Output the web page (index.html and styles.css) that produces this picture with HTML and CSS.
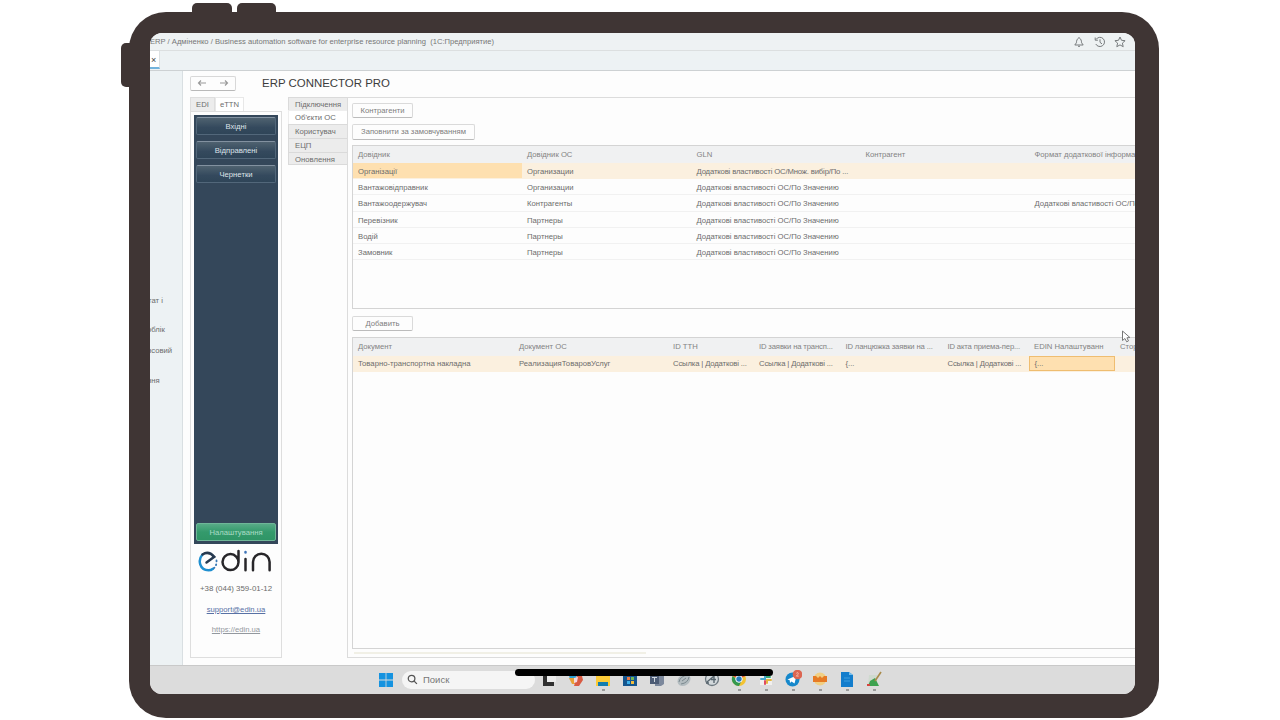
FILE: index.html
```html
<!DOCTYPE html>
<html lang="uk">
<head>
<meta charset="utf-8">
<title>ERP Connector Pro</title>
<link rel="stylesheet" href="styles.css">
</head>
<body>
<div class="tablet">
  <i class="hw hw-a"></i><i class="hw hw-b"></i><i class="hw hw-side"></i>
  <div class="screen">
    <header class="titlebar">
      <span class="app-name">ERP / Адміненко / Business automation software for enterprise resource planning &nbsp;(1С:Предприятие)</span>
      <span class="tools">
        <svg viewBox="0 0 12 12"><path d="M1.800 9h8.400L8.600 6.800C8.500 4.500 7.900 3 6 1.500 4.100 3 3.500 4.500 3.400 6.800ZM5 10.300h2"/></svg>
        <svg viewBox="0 0 12 12"><path d="M2 3.500A4.600 4.600 0 1 1 1.800 8M1.200 1.500v2.700h2.700M6 3.300v3l2 1.600"/></svg>
        <svg viewBox="0 0 12 12"><path d="m6 1 1.500 3.300 3.600.4-2.700 2.400.8 3.600L6 8.900l-3.200 1.800.8-3.600L.9 4.700l3.600-.4Z"/></svg>
      </span>
    </header>
    <div class="tabstrip"><span class="open-tab">×</span></div>
    <div class="workspace">
      <aside class="sections">
        <span>тат і</span><span>облік</span><span>нсовий</span><span>ння</span>
      </aside>
      <main class="page">
        <div class="heading">
          <div class="history">
            <svg viewBox="0 0 10 8"><path d="M9 4H1.500M4 1.500 1.500 4 4 6.500"/></svg>
            <svg viewBox="0 0 10 8"><path d="M1 4h7.500M6 1.500 8.500 4 6 6.500"/></svg>
          </div>
          <h1>ERP CONNECTOR PRO</h1>
        </div>
        <div class="columns">
          <section class="edin">
            <div class="toptabs"><span class="toptab">EDI</span><span class="toptab current">eTTN</span></div>
            <div class="edin-box">
              <div class="menu">
                <button>Вхідні</button><button>Відправлені</button><button>Чернетки</button>
                <button class="green">Налаштування</button>
              </div>
              <svg class="logo" viewBox="0 0 74 26">
                <g fill="none" stroke-width="2.500" stroke-linecap="round">
                  <path stroke="#1f8fd0" d="M4.500 6.500C-.5 12 1.500 22 10.500 22.300q2.500 0 4.500-1.600"/>
                  <path stroke="#263a50" d="M8.500 14.500 16.300 8.800Q10.500 2.300 4.500 6.500"/>
                  <path stroke="#3577b5" stroke-width="1.800" stroke-dasharray=".8 3" d="M18.500 12.500Q19 17.500 15.500 20.500"/>
                  <path stroke="#272629" d="M40.500 3V14.300a8 8 0 1 1-8-8.200c4.500 0 8 3.700 8 8.200M47.500 11v11.300M55 22.300V14a8.200 8.200 0 0 1 16.600 0v8.300"/>
                  <path stroke="#3e74b8" d="M47.500 4v.5"/>
                </g>
              </svg>
              <p class="phone">+38 (044) 359-01-12</p>
              <a class="mail">support@edin.ua</a>
              <a class="site">https://edin.ua</a>
            </div>
          </section>
          <nav class="sidetabs">
            <span>Підключення</span><span class="current">Об'єкти ОС</span><span>Користувач</span><span>ЕЦП</span><span>Оновлення</span>
          </nav>
          <section class="content">
            <button class="btn b1">Контрагенти</button>
            <button class="btn b2">Заповнити за замовчуванням</button>
            <div class="table t1">
              <div class="row head"><span>Довідник</span><span>Довідник ОС</span><span>GLN</span><span>Контрагент</span><span>Формат додаткової інформації</span></div>
              <div class="row sel"><span class="cell-on">Організації</span><span>Организации</span><span class="fit">Додаткові властивості ОС/Множ. вибір/По ...</span><span></span><span></span></div>
              <div class="row"><span>Вантажовідправник</span><span>Организации</span><span>Додаткові властивості ОС/По Значению</span><span></span><span></span></div>
              <div class="row"><span>Вантажоодержувач</span><span>Контрагенты</span><span>Додаткові властивості ОС/По Значению</span><span></span><span>Додаткові властивості ОС/По</span></div>
              <div class="row"><span>Перевізник</span><span>Партнеры</span><span>Додаткові властивості ОС/По Значению</span><span></span><span></span></div>
              <div class="row"><span>Водій</span><span>Партнеры</span><span>Додаткові властивості ОС/По Значению</span><span></span><span></span></div>
              <div class="row"><span>Замовник</span><span>Партнеры</span><span>Додаткові властивості ОС/По Значению</span><span></span><span></span></div>
            </div>
            <button class="btn b3">Добавить</button>
            <div class="table t2">
              <div class="row head"><span>Документ</span><span>Документ ОС</span><span>ID ТТН</span><span class="fit">ID заявки на трансп...</span><span class="fit">ID ланцюжка заявки на ...</span><span class="fit">ID акта приема-пер...</span><span>EDIN Налаштуванн</span><span>Сторона</span></div>
              <div class="row sel"><span>Товарно-транспортна накладна</span><span>РеализацияТоваровУслуг</span><span class="fit">Ссылка | Додаткові ...</span><span class="fit">Ссылка | Додаткові ...</span><span>{...</span><span class="fit">Ссылка | Додаткові ...</span><span class="cell-on">{...</span><span></span></div>
            </div>
            <div class="scroll"></div>
          </section>
        </div>
      </main>
    </div>
    <footer class="taskbar">
      <svg class="win" viewBox="0 0 16 16"><path fill="#1593e0" d="M1 1h6.600v6.600H1zM8.400 1H15v6.600H8.400zM1 8.400h6.600V15H1zM8.400 8.400H15V15H8.400z"/></svg>
      <div class="search"><svg viewBox="0 0 12 12"><circle cx="5" cy="5" r="3.600"/><path d="m7.800 7.800 3 3"/></svg>Поиск</div>
      <div class="apps">
        <svg viewBox="0 0 18 22"><path fill="#ececec" d="M7 4h9v8H7z"/><path fill="#303030" d="M3 5h4v7h7v4H3z"/></svg>
        <svg viewBox="0 0 18 22"><path fill="#2b9ed0" d="M2 5h8L8 10H3z"/><path fill="#e9a235" d="M2 8h5l3 6H5z"/><path fill="#d95b43" d="M10 6h5l1 4-4 6H7z"/><path fill="#f3d9e0" d="m7 8 4-1-1 5-3 1z"/></svg>
        <svg viewBox="0 0 18 22"><path fill="#fccb38" d="M2 5h14v11H2z"/><path fill="#137dae" d="M4 12h10v4H4z"/><path class="dot" d="M8 20h3"/></svg>
        <svg viewBox="0 0 18 22"><path fill="#14558e" d="M2 4h14v12H2z"/><path fill="#e97846" d="M6 7h3v3H6z"/><path fill="#72b551" d="M10 7h3v3h-3z"/><path fill="#3cb0ea" d="M6 11h3v3H6z"/><path fill="#f2bd3d" d="M10 11h3v3h-3z"/></svg>
        <svg viewBox="0 0 18 22"><path fill="#7c889c" d="M7 5h9v9l-3 2H7z"/><path fill="#4d5c75" d="M2 5h9v9H2z"/><path stroke="#cfd6de" d="M4 7.500h5M6.500 7.500V12"/></svg>
        <svg viewBox="0 0 18 22"><ellipse cx="9" cy="10" rx="7" ry="5.500" fill="#b3bcc0" transform="rotate(-35 9 10)"/><path fill="none" stroke="#7b898f" d="M4 12Q5 6 13 5M6 14q7-1 8-7M7 11l4-3"/></svg>
        <svg viewBox="0 0 18 22"><circle cx="9" cy="9" r="6.500" fill="#d3d9dc" stroke="#6e7980" stroke-width="1.300"/><path fill="none" stroke="#5a6770" stroke-width="1.400" d="m4 12 7-6v7M8 9.500h5M3 13h3"/></svg>
        <svg viewBox="0 0 18 22"><circle cx="9" cy="9" r="7" fill="#f3c332"/><path fill="#d84a38" d="M9 9 2.500 6Q9-2 15.500 6z"/><path fill="#34984f" d="M2.500 6A7 7 0 0 0 9 16l2-4z"/><circle cx="9" cy="9" r="3.300" fill="#287dc0" stroke="#fff"/><path class="dot" d="M8 20h3"/></svg>
        <svg viewBox="0 0 18 22"><path fill="#f2f0ee" d="M3 3h12v12H3z"/><g fill="none" stroke-width="2" stroke-linecap="round"><path stroke="#34a778" d="M10 4v3h3"/><path stroke="#e4b73f" d="M14 10h-4v3"/><path stroke="#df4b62" d="M8 14v-3"/><path stroke="#46a9ce" d="M4 9h4V5"/></g><path class="dot" d="M8 20h3"/></svg>
        <svg viewBox="0 0 18 22"><circle cx="8.500" cy="9.500" r="7" fill="#1688cb"/><path fill="#fff" d="m3.500 9.500 9-4-2 8-3-2-1.500 1.500-.3-2.700z"/><circle cx="13.500" cy="4.500" r="4.800" fill="#dc6551"/><path fill="none" stroke="#f6c9bd" stroke-width=".8" d="M12.300 3.300q2-1.500 2 .2 0 .8-2 2.600h2.400"/><path class="dot" d="M8 20h3"/></svg>
        <svg viewBox="0 0 18 22"><circle cx="9" cy="9" r="6.500" fill="#f1cf83"/><path fill="#e67a25" d="M2 6h3l2 2 2-2 2 2 2-2h3v6H2z"/><path class="dot" d="M8 20h3"/></svg>
        <svg viewBox="0 0 18 22"><path fill="#137dcc" d="M3 2h8l4 3v12H3z"/><path fill="#76bfed" d="M11 2v3h4z"/><path stroke="#3f9fdf" d="M6 8h6M6 11h6"/><path class="dot" d="M8 20h3"/></svg>
        <svg viewBox="0 0 18 22"><path fill="#cfdacf" d="M4 5h8v10H3z"/><path fill="#3da24f" d="m3 16 2-5 5-3 4 8z"/><path stroke="#a98a4a" stroke-width="1.600" d="m10 11 6-9"/><path fill="#d4463d" d="M2 14h3v2H2z"/><path class="dot" d="M8 20h3"/></svg>
      </div>
    </footer>
    <svg class="pointer" viewBox="0 0 10 13"><path d="M1.500 1v9.500l2.400-2 1.800 3.300 1.800-.9-1.600-3.100 3-.3z"/></svg>
    <i class="home-bar"></i>
  </div>
</div>
</body>
</html>
```
FILE: styles.css
```css
* { box-sizing: border-box; }
body { margin: 0; width: 1280px; height: 720px; overflow: hidden; background: #fff; padding: 12px 0 0 129px; font: 7.700px/10px "Liberation Sans", Arial, sans-serif; color: #6c6c6c; }
button { font: inherit; color: inherit; padding: 0; display: block; white-space: nowrap; }
.tablet { position: relative; width: 1030px; height: 706px; border-radius: 37px; background: #3f3534; padding: 20.500px 24px 24px 21px; }
.hw { position: absolute; background: #3f3534; }
.hw-a, .hw-b { top: -9px; height: 12px; width: 40px; border-radius: 5px 5px 0 0; }
.hw-a { left: 63px; } .hw-b { left: 108px; width: 39px; }
.hw-side { left: -8px; top: 31px; width: 12px; height: 44px; border-radius: 5px 0 0 5px; }
.screen { position: relative; width: 985px; height: 661.500px; border-radius: 12px; overflow: hidden; background: #fdfdfd; display: flex; flex-direction: column; white-space: nowrap; }
.titlebar { height: 18.500px; flex: none; background: #eef2f3; border-bottom: 1px solid #dcdfe0; display: flex; justify-content: space-between; align-items: center; padding-right: 9px; }
.app-name { color: #777; font-size: 7.620px; padding-top: 1.500px; }
.tools { display: flex; gap: 8.500px; padding-top: 1px; }
.tools svg { width: 12px; height: 12px; fill: none; stroke: #777b7d; stroke-width: 1; }
.tabstrip { height: 19.500px; flex: none; background: #edf2f4; border-bottom: 1px solid #cdd1d3; }
.open-tab { display: block; width: 10px; height: 18px; background: #fff; border-right: 1px solid #dde1e2; border-bottom: 2px solid #72b3dc; font-size: 9px; line-height: 19px; padding-left: 1px; color: #444; }
.workspace { flex: 1; display: flex; min-height: 0; }
.sections { width: 33px; flex: none; background: #edf2f4; border-right: 1px solid #d9dfe2; padding-top: 225.500px; display: flex; flex-direction: column; overflow: hidden; }
.sections span { height: 10px; margin-bottom: 19px; margin-left: -2px; }
.sections span:nth-child(2) { margin-bottom: 11px; margin-left: -3px; }
.sections span:nth-child(3) { margin-bottom: 20px; margin-left: -3px; }
.sections span:nth-child(4) { margin-left: -3px; }
.page { flex: 1; min-width: 0; padding-left: 7px; }
.heading { height: 26px; display: flex; }
.history { margin-top: 5px; width: 46px; height: 15px; border: 1px solid #d8d8d8; border-bottom-color: #b9b9b9; border-radius: 2px; display: flex; justify-content: space-around; align-items: center; }
.history svg { width: 10px; height: 8px; fill: none; stroke: #9a9a9a; stroke-width: 1.200; }
h1 { margin: 4px 0 0 26px; font-size: 11.450px; line-height: 16px; font-weight: 400; color: #3c3c3c; }
.columns { display: flex; height: 561px; }
.edin { width: 92px; flex: none; }
.toptabs { display: flex; height: 14px; line-height: 14px; }
.toptab { width: 25px; text-align: center; background: #ececec; border: 1px solid #dedede; border-bottom: 0; }
.toptab.current { width: 29px; background: #fff; border-color: #e8e8e8; }
.edin-box { height: 547px; border: 1px solid #dedede; padding: 3.500px 3px 0; text-align: center; display: flex; flex-direction: column; align-items: center; }
.menu { width: 84px; height: 429px; flex: none; background: #34475a; padding: 2px 2px 3px; display: flex; flex-direction: column; gap: 6px; }
.menu button { height: 18px; line-height: 15px; border: 1px solid #52677a; border-top-color: #8291a0; border-radius: 2px; background: linear-gradient(#4f6270, #34495d 60%, #2f4558); color: #dde3e8; }
.menu .green { margin-top: auto; background: linear-gradient(#58ab87, #349a6c 50%, #2f9566); border-color: #6fb698; color: #a9dcc5; }
.logo { width: 74px; height: 26px; margin: 4px 2px 0 0; flex: none; }
.phone { margin: 10px 0 0; font-size: 7.900px; }
.mail { margin-top: 11px; text-decoration: underline; color: #5871a5; }
.site { margin-top: 10px; text-decoration: underline; color: #93989e; }
.sidetabs { width: 60px; margin-left: 6px; flex: none; }
.sidetabs span { display: block; height: 13.800px; line-height: 13.500px; padding-left: 6px; background: #ececec; border: 1px solid #dadada; border-bottom: 0; }
.sidetabs span:last-child { border-bottom: 1px solid #dadada; }
.sidetabs .current { background: #fff; border-color: #eee; }
.content { flex: 1; min-width: 0; margin-left: -1px; border: solid #dcdcdc; border-width: 1px 0 1px 1px; padding: 5px 0 0 4px; }
.btn { height: 15.500px; line-height: 13.500px; background: #fdfdfd; border: 1px solid #dadada; border-bottom: 1.500px solid #bcbcbc; border-radius: 2px; color: #7d7d7d; }
.b1 { width: 61px; } .b2 { width: 123px; margin-top: 6px; } .b3 { width: 61px; margin-top: 7px; }
.table { border: 1px solid #d4d4d4; border-right: 0; }
.t1 { height: 164px; margin-top: 5px; } .t2 { height: 312px; margin-top: 6px; }
.row { display: grid; height: 16.200px; line-height: 17.500px; border-bottom: 1px solid #f1f1f1; }
.row > span { padding-left: 5px; overflow: hidden; }
.row > .fit { letter-spacing: -.15px; }
.t1 .row { grid-template-columns: 169px 169.500px 169px 169px 120px; }
.t2 .row { grid-template-columns: 161px 154px 86px 86.500px 102px 86.500px 86px 60px; }
.row.head { height: 17.500px; line-height: 18px; background: #f0f1f2; color: #838383; }
.row.sel { background: #fbf0df; border-color: #fbf0df; }
.row .cell-on { background: #fee0b0; }
.t2 .sel { line-height: 16.500px; }
.t2 .sel .cell-on { border: 1px solid #efbd70; line-height: 14px; padding-left: 4.500px; }
.scroll { width: 292px; height: 2px; margin: 3px 0 0 2px; background: #f1f0e6; }
.taskbar { height: 29.500px; flex: none; background: #dcdcdc; border-top: 1px solid #c9c9c9; display: flex; align-items: center; padding-left: 228px; }
.win { width: 16px; height: 16px; }
.search { width: 133px; height: 18px; border-radius: 9px; background: #f5f5f5; margin-left: 8px; padding-left: 5px; display: flex; align-items: center; gap: 5px; font-size: 9.500px; color: #777; }
.search svg { width: 11px; height: 11px; fill: none; stroke: #555; stroke-width: 1.400; }
.apps { display: flex; gap: 9.100px; margin-left: 5px; padding-top: 3px; }
.apps svg { width: 18px; height: 22px; }
.dot { stroke: #858585; stroke-width: 1.500; }
.pointer { position: absolute; left: 971px; top: 297px; width: 10px; height: 13px; fill: #fff; stroke: #777; stroke-width: 1; }
.home-bar { position: absolute; left: 365px; top: 636.500px; width: 258px; height: 7px; border-radius: 4px; background: #000; }
```
